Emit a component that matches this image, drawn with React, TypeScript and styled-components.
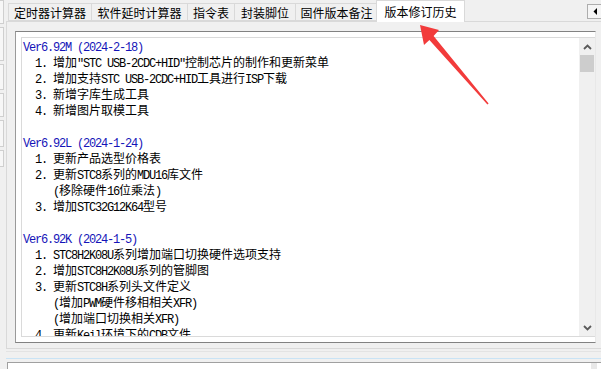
import React from 'react'
import styled, { createGlobalStyle } from 'styled-components'

const GlobalStyle = createGlobalStyle`
  html, body {
    margin: 0;
    padding: 0;
    background: #f0f0f0;
    overflow: hidden;
  }
`

type Line = { kind: 'ver' | 'text' | 'blank'; text?: string }

const tabs = [
  { label: '定时器计算器', w: 84 },
  { label: '软件延时计算器', w: 97 },
  { label: '指令表', w: 48 },
  { label: '封装脚位', w: 62 },
  { label: '固件版本备注', w: 83 },
  { label: '版本修订历史', w: 89 },
]
const activeTab = 5

const notes: Line[] = [
  { kind: 'ver', text: 'Ver6.92M (2024-2-18)' },
  { kind: 'text', text: '  1. 增加"STC USB-2CDC+HID"控制芯片的制作和更新菜单' },
  { kind: 'text', text: '  2. 增加支持STC USB-2CDC+HID工具进行ISP下载' },
  { kind: 'text', text: '  3. 新增字库生成工具' },
  { kind: 'text', text: '  4. 新增图片取模工具' },
  { kind: 'blank' },
  { kind: 'ver', text: 'Ver6.92L (2024-1-24)' },
  { kind: 'text', text: '  1. 更新产品选型价格表' },
  { kind: 'text', text: '  2. 更新STC8系列的MDU16库文件' },
  { kind: 'text', text: '     (移除硬件16位乘法)' },
  { kind: 'text', text: '  3. 增加STC32G12K64型号' },
  { kind: 'blank' },
  { kind: 'ver', text: 'Ver6.92K (2024-1-5)' },
  { kind: 'text', text: '  1. STC8H2K08U系列增加端口切换硬件选项支持' },
  { kind: 'text', text: '  2. 增加STC8H2K08U系列的管脚图' },
  { kind: 'text', text: '  3. 更新STC8H系列头文件定义' },
  { kind: 'text', text: '     (增加PWM硬件移相相关XFR)' },
  { kind: 'text', text: '     (增加端口切换相关XFR)' },
  { kind: 'text', text: '  4. 更新Keil环境下的CDB文件' },
  { kind: 'text', text: '  5. 更新STC8H系列的头文件' },
]

const sideBoxes = [22, 32, 24, 22, 25, 15]

// split a line into ascii / cjk runs so each gets its own font
const splitRuns = (text: string) => text.match(/[\x00-\x7f]+|[^\x00-\x7f]+/g) || []

const App = () => {
  return (
    <Screen>
      <GlobalStyle />
      <SideStrip>
        {sideBoxes.map((h, i) => (
          <SideBox key={i} $h={h} />
        ))}
      </SideStrip>
      <Main>
        <TabStrip>
          {tabs.map((t, i) => (
            <Tab key={t.label} $w={t.w} $active={i === activeTab}>
              {t.label}
            </Tab>
          ))}
          <TabArrows>
            <ArrowBtn>
              <svg width="5" height="7" viewBox="0 0 5 7">
                <polygon points="4,0 4,7 0.5,3.5" fill="#000" />
              </svg>
            </ArrowBtn>
            <ArrowBtn />
          </TabArrows>
        </TabStrip>
        <TabPage>
          <Frame>
            <Inner>
              <TextArea>
                {notes.map((l, i) =>
                  l.kind === 'blank' ? (
                    <TextLine key={i}> </TextLine>
                  ) : (
                    <TextLine key={i} $ver={l.kind === 'ver'}>
                      {splitRuns(l.text || '').map((r, j) =>
                        /^[\x00-\x7f]/.test(r) ? <Ascii key={j}>{r}</Ascii> : <Han key={j}>{r}</Han>
                      )}
                    </TextLine>
                  )
                )}
              </TextArea>
              <ScrollBar>
                <ScrollBtn>
                  <svg width="9" height="6" viewBox="0 0 9 6">
                    <polyline points="1,5 4.5,1.5 8,5" fill="none" stroke="#5a5a5a" strokeWidth="1.8" />
                  </svg>
                </ScrollBtn>
                <Thumb />
                <ScrollTrack />
                <ScrollBtn>
                  <svg width="9" height="6" viewBox="0 0 9 6">
                    <polyline points="1,1 4.5,4.5 8,1" fill="none" stroke="#5a5a5a" strokeWidth="1.8" />
                  </svg>
                </ScrollBtn>
              </ScrollBar>
            </Inner>
          </Frame>
        </TabPage>
        <Splitter>
          <SplitLine />
        </Splitter>
        <LogBox>
          <LogScroll />
        </LogBox>
      </Main>
      <Pointer width="601" height="369" viewBox="0 0 601 369">
        <polygon
          points="420,25 439,30 433.6,36 488.6,103.6 487.4,104.4 429.4,40 424,45"
          fill="#f23b3b"
        />
      </Pointer>
    </Screen>
  )
}
export default App

const Screen = styled.div`
  position: relative;
  width: 601px;
  height: 369px;
  overflow: hidden;
  display: flex;
  gap: 2px;
  background: #f0f0f0;
  font-family: 'Noto Sans CJK SC', sans-serif;
`
const SideStrip = styled.div`
  width: 5px;
  display: flex;
  flex-direction: column;
  gap: 3px;
`
const SideBox = styled.div<{ $h: number }>`
  height: ${(p) => p.$h}px;
  width: 3px;
  background: #f7f7f7;
  border: 1px solid #cfcfcf;
  border-left: none;
`
const Main = styled.div`
  width: 596px;
  flex-shrink: 0;
  display: flex;
  flex-direction: column;
`
const TabStrip = styled.div`
  height: 21px;
  display: flex;
  align-items: flex-end;
  padding-left: 2px;
  position: relative;
  z-index: 1;
`
const Tab = styled.div<{ $active?: boolean; $w: number }>`
  width: ${(p) => p.$w}px;
  height: ${(p) => (p.$active ? 22 : 18)}px;
  margin-bottom: ${(p) => (p.$active ? -1 : 0)}px;
  margin-left: ${(p) => (p.$active ? -2 : -1)}px;
  box-sizing: border-box;
  display: flex;
  align-items: center;
  justify-content: center;
  font-size: 12px;
  color: #000;
  background: ${(p) => (p.$active ? '#fff' : '#f0f0f0')};
  border: 1px solid #d9d9d9;
  border-bottom: ${(p) => (p.$active ? 'none' : '1px solid #d9d9d9')};
  white-space: nowrap;
  &:first-child {
    margin-left: 0;
  }
`
const TabArrows = styled.div`
  margin-left: auto;
  align-self: flex-start;
  margin-top: 4px;
  display: flex;
  gap: 1px;
  margin-right: -20px;
`
const ArrowBtn = styled.div`
  width: 17px;
  height: 15px;
  box-sizing: border-box;
  border: 1px solid #adadad;
  background: #f5f5f5;
  display: flex;
  align-items: center;
  justify-content: center;
`
const TabPage = styled.div`
  height: 328px;
  box-sizing: border-box;
  border: 1px solid #d9d9d9;
  background: #f0f0f0;
  padding: 9px 0 5px 8px;
`
const Frame = styled.div`
  width: 581px;
  height: 312px;
  box-sizing: border-box;
  background: #fff;
  border-top: 1px solid #828282;
  border-left: 1px solid #9a9a9a;
  border-bottom: 1px solid #828282;
  border-right: 1px solid #e8e8e8;
  padding: 5px 0 5px 5px;
  display: flex;
`
const Inner = styled.div`
  flex: 1;
  display: flex;
  border: 1px solid #dadada;
  border-right: none;
  overflow: hidden;
`
const TextArea = styled.div`
  flex: 1;
  overflow: hidden;
  padding: 0 0 0 1px;
`
const TextLine = styled.div<{ $ver?: boolean }>`
  height: 16px;
  line-height: 16px;
  white-space: pre;
  font-size: 12px;
  color: ${(p) => (p.$ver ? '#1414b8' : '#000')};
`
const Ascii = styled.span`
  font-family: 'Liberation Mono', monospace;
  letter-spacing: -1.2px;
`
const Han = styled.span`
  font-family: 'Noto Sans CJK SC', sans-serif;
`
const ScrollBar = styled.div`
  width: 16px;
  background: #f0f0f0;
  display: flex;
  flex-direction: column;
  align-items: center;
`
const ScrollBtn = styled.div`
  height: 17px;
  width: 100%;
  display: flex;
  align-items: center;
  justify-content: center;
`
const Thumb = styled.div`
  width: 14px;
  height: 17px;
  background: #cdcdcd;
`
const ScrollTrack = styled.div`
  flex: 1;
`
const Splitter = styled.div`
  height: 11px;
  padding-top: 6px;
  box-sizing: border-box;
  border-top: 1px solid #e3e3e3;
  margin-top: 2px;
`
const SplitLine = styled.div`
  height: 1px;
  background: #c9e3f5;
`
const LogBox = styled.div`
  flex: 1;
  margin-left: 1px;
  background: #fff;
  border-top: 1px solid #a0a0a0;
  border-left: 1px solid #a0a0a0;
  display: flex;
  justify-content: flex-end;
`
const LogScroll = styled.div`
  width: 6px;
  margin-right: 5px;
  background: #e8e8e8;
`
const Pointer = styled.svg`
  position: absolute;
  left: 0;
  top: 0;
  pointer-events: none;
  z-index: 5;
`
